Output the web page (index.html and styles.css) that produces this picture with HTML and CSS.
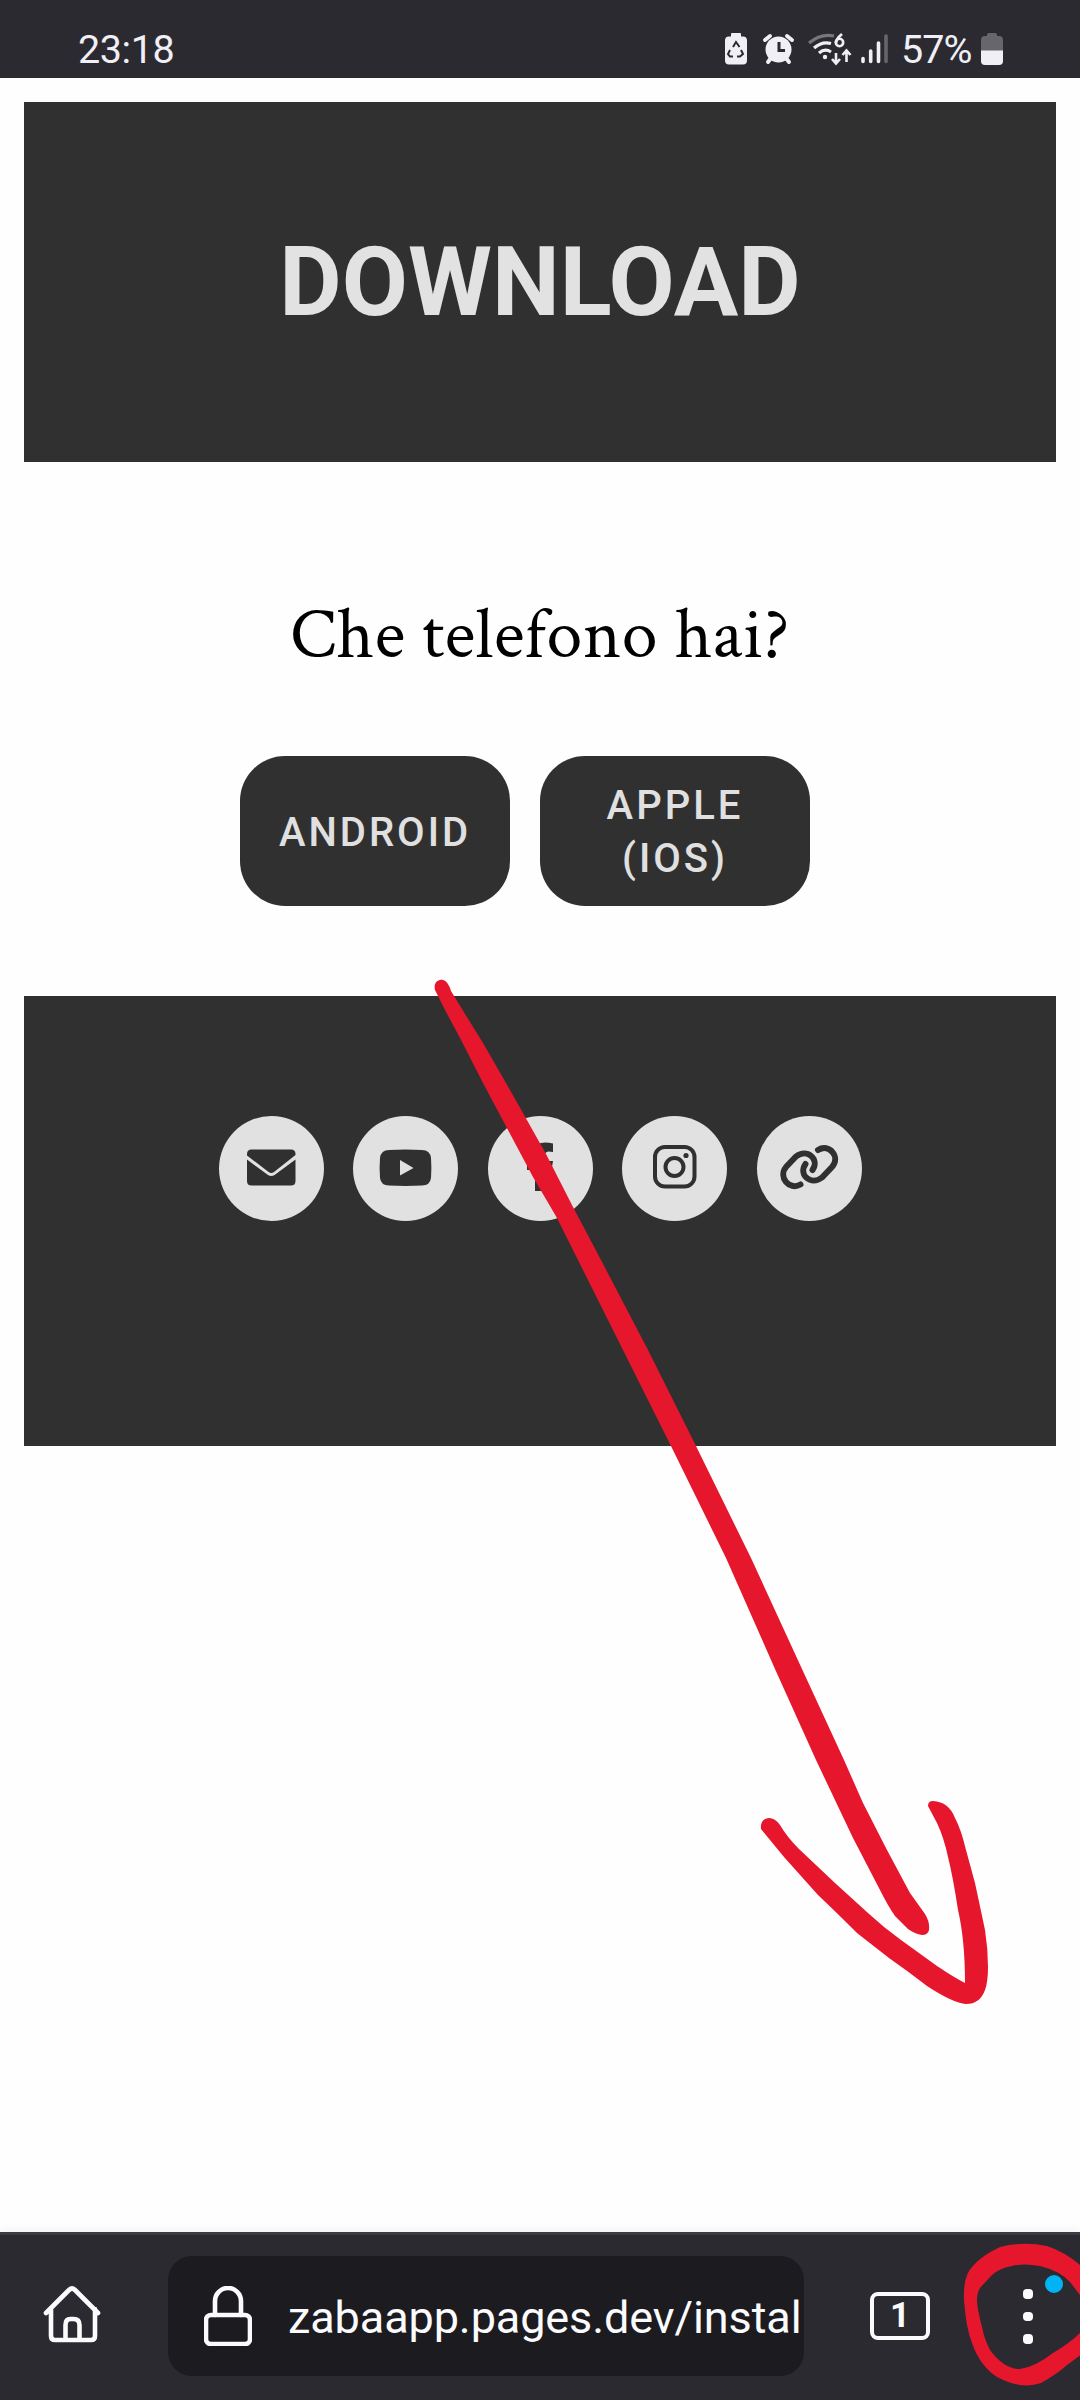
FILE: index.html
```html
<!DOCTYPE html>
<html lang="it">
<head>
<meta charset="utf-8">
<title>Download</title>
<link rel="stylesheet" href="styles.css">
</head>
<body>
<div class="status">
  <span class="clock">23:18</span>
  <svg class="status-icons" width="170" height="36" viewBox="720 31 170 36">
    <path fill="#f0eff5" d="M731 34q0-1 1-1h8q1 0 1 1v2.500h2q4 0 4 4v20q0 4-4 4h-14q-4 0-4-4v-20q0-4 4-4h2z"/>
    <g fill="none" stroke="#2b2a30" stroke-width="2"><path d="M733 47l3-5 3.500 5M741 50l2 4-3 2.500h-3M733 56.500h-3l-2-2.500 2-4"/></g>
    <circle cx="778.500" cy="49.500" r="13" fill="#f0eff5"/>
    <path d="M765 40l5-4M787 36l5 4M768 62l3-4M789 62l-3-4" stroke="#f0eff5" stroke-width="4" stroke-linecap="round"/>
    <path d="M779 42v8.500h6" fill="none" stroke="#2b2a30" stroke-width="3"/>
    <g fill="none" stroke-width="3.200">
      <path d="M809 43q12-10 25-7" stroke="#77767c"/>
      <path d="M814 48q8-7 17-4.500M819 53q6-5 12-1" stroke="#f0eff5"/>
    </g>
    <circle cx="825" cy="57" r="2.200" fill="#f0eff5"/>
    <path d="M842 34q-6 5-6 9" fill="none" stroke="#f0eff5" stroke-width="2.800"/>
    <circle cx="839.500" cy="42.500" r="3.700" fill="none" stroke="#f0eff5" stroke-width="2.600"/>
    <path d="M836 53v10M832 59l4 4.500 4-4.500M846.500 62v-11M842.500 55l4-4.500 4 4.500" fill="none" stroke="#f0eff5" stroke-width="2.600"/>
    <path d="M863 58.500v3M870.700 51v10.500M878.500 43v18.500" stroke="#f0eff5" stroke-width="3.600" stroke-linecap="round"/>
    <path d="M886 36v25.500" stroke="#66656b" stroke-width="3.600" stroke-linecap="round"/>
  </svg>
  <span class="percent">57%</span>
  <svg class="battery" width="22" height="33" viewBox="0 0 22 33">
    <path fill="#67666c" d="M6 1.500Q6 0 8 0h6q2 0 2 1.500V3h2q4 0 4 4v11H0V7q0-4 4-4h2z"/>
    <path fill="#f0eff5" d="M0 17.500h22V28q0 4-4 4H4q-4 0-4-4z"/>
  </svg>
</div>

<main class="page">
  <header class="hero"><h1>DOWNLOAD</h1></header>
  <section class="question">
    <p>Che telefono hai?</p>
    <div class="choices">
      <a class="choice">ANDROID</a>
      <a class="choice">APPLE (IOS)</a>
    </div>
  </section>
  <footer class="social">
    <a class="round"><svg viewBox="0 0 105 105">
      <path d="M28 38q0-4.500 4.500-4.500h39.500q4.500 0 4.500 4.500v1L55 56q-2.700 2-5.400 0L28 39.500zM28 43.500l21 15.500q3.300 2 6.600 0L76.500 43.500V65q0 4.500-4.500 4.500H32.500Q28 69.500 28 65z"/>
    </svg></a>
    <a class="round"><svg viewBox="0 0 105 105">
      <path fill-rule="evenodd" d="M36 34q16.500-1.200 33 0 8 0 9 8 .8 10 0 20-1 7.500-9 7.500-16.500.8-33 0-8 0-9-7.500-.8-10 0-20 1-8 9-8zM47 44v15.500L60.500 52z"/>
    </svg></a>
    <a class="round"><svg viewBox="0 0 105 105">
      <path d="M65 27.500q-7-1.500-12-.5-7 1.500-7 10v7h-7v10h8V75h10.500V54h6l1.500-9h-8.500V40q0-4 4-4.500l4.500 .5z"/>
    </svg></a>
    <a class="round"><svg viewBox="0 0 105 105">
      <rect class="line" x="33" y="31" width="39.500" height="39.500" rx="10"/>
      <circle class="line" cx="52.500" cy="51" r="9"/>
      <circle cx="64" cy="39.500" r="2.600"/>
    </svg></a>
    <a class="round"><svg viewBox="0 0 105 105">
      <path class="chain" d="M43.500 68.500C32 75 21 61 29 51L39 40.500C50 32 63 43 55.500 54M61 34C72 27 84 41 75 51L65 61.500C54 70 41 59 48.500 48"/>
    </svg></a>
  </footer>
</main>

<nav class="browser-bar">
  <svg class="home" width="58" height="60" viewBox="0 0 58 60">
    <path d="M3 29L26 6q3-3 6 0l23 23M8 25v27q0 4 4 4h36q4 0 4-4V25M22.500 56V41q0-6 5-6h3q6 0 6 6v15"/>
  </svg>
  <div class="address">
    <svg class="lock" width="48" height="60" viewBox="0 0 48 60">
      <rect x="2" y="29" width="44" height="29" rx="5"/>
      <path d="M11 29V15a13 13 0 0 1 26 0v14"/>
    </svg>
    <span>zabaapp.pages.dev/instal</span>
  </div>
  <div class="tabs">1</div>
  <div class="menu"><i></i><i></i><i></i><b></b></div>
</nav>

<svg class="ink" width="1080" height="2400" viewBox="0 0 1080 2400">
  <path d="M435 990C433 982 439 979 443 980Q448 981 451 991L462 1009 483 1043 514 1097 546 1154 573 1207 601 1260 648 1350 696 1446 751 1558 802 1669 844 1760 863 1803 887 1850 910 1893 925 1914Q930 1922 929 1930Q928 1935 922 1935Q915 1934 908 1929L895 1916Q888 1906 880 1890L853 1838 816 1760 775 1669 726 1558 671 1446 623 1350 578 1260 557 1218 533 1177 500 1115 483 1083 460 1038 445 1010Z"/>
  <path d="M761 1829Q760 1819 769 1818Q775 1818 780 1825Q787 1837 799 1849L835 1883 868 1913Q883 1927 901 1940L937 1966Q955 1978 965 1983Q965 1940 958 1910Q953 1877 948 1857Q944 1838 937 1823L928 1806Q928 1801 933 1801Q949 1802 955 1818Q961 1829 966 1850L975 1883Q981 1911 985 1930Q988 1949 988 1967Q988 1982 985 1990Q980 2004 966 2004Q953 2003 927 1986Q909 1972 889 1958L857 1933Q836 1912 818 1895L784 1857Z"/>
  <path fill-rule="evenodd" d="M1090 2273L1080 2265Q1065 2252 1047 2246Q1023 2241 1000 2247Q981 2256 973 2266Q963 2275 964 2300Q966 2328 972 2343Q980 2366 997 2377Q1022 2390 1041 2383Q1057 2374 1067 2365L1090 2348V2325L1080 2333Q1070 2343 1053 2353Q1035 2367 1020 2369Q1004 2369 990 2350Q984 2338 982 2327Q977 2308 977 2300Q977 2293 980 2288L992 2275Q1000 2268 1012 2266Q1023 2263 1040 2266Q1060 2271 1070 2282L1080 2295 1090 2310Z"/>
</svg>
</body>
</html>
```
FILE: styles.css
```css
* { box-sizing: border-box; }
body {
  position: relative;
  display: flex;
  flex-direction: column;
  width: 1080px;
  height: 2400px;
  margin: 0;
  overflow: hidden;
  background: #fefefe;
  font-family: Roboto, sans-serif;
}
.status {
  display: flex;
  height: 78px;
  padding: 0 77px 0 78px;
  background: #2b2a30;
  color: #f0eff5;
  font-size: 39.5px;
  line-height: 46px;
}
.clock { margin: 27px auto 0 0; letter-spacing: -0.4px; }
.status-icons { margin-top: 31px; }
.percent { width: 78px; margin: 27px 2px 0 11px; letter-spacing: -1px; }
.battery { margin-top: 33px; }

.page { flex: 1; padding: 24px 24px 0; }
.hero {
  display: flex;
  align-items: center;
  justify-content: center;
  height: 360px;
  background: #303030;
}
h1 {
  margin: 0;
  color: #e2e2e2;
  font-size: 96px;
  line-height: 112px;
  font-weight: 700;
}
.question { height: 534px; padding-top: 129px; }
.question p {
  height: 90px;
  margin: 0;
  color: #000;
  font: 72px/90px "Crimson Text", "Liberation Serif", serif;
  letter-spacing: .6px;
  text-align: center;
}
.choices { display: flex; gap: 30px; padding: 75px 0 0 216px; }
.choice {
  display: flex;
  align-items: center;
  justify-content: center;
  width: 270px;
  height: 150px;
  padding: 2px 36px 0;
  border-radius: 45px;
  background: #303030;
  color: #e0e0e0;
  font-size: 40px;
  font-weight: 500;
  line-height: 53px;
  letter-spacing: 3px;
  text-align: center;
}
.social {
  display: flex;
  justify-content: center;
  gap: 29.5px;
  height: 450px;
  padding-top: 120px;
  background: #303030;
}
.round { width: 105px; height: 105px; border-radius: 50%; background: #e1e1e1; }
.round svg { display: block; fill: #303030; }
.round .line { fill: none; stroke: #303030; stroke-width: 4; }
.round .chain { fill: none; stroke: #303030; stroke-width: 6; stroke-linecap: round; }

.browser-bar {
  display: flex;
  height: 168px;
  border-top: 3px solid #3c3b41;
  background: #2b2a30;
  box-shadow: 0 -2px 9px rgba(0, 0, 0, .06);
}
.browser-bar svg { fill: none; stroke: #fbfbfe; stroke-width: 4.6; stroke-linecap: round; }
.home { margin: 49px 0 0 43px; }
.address {
  display: flex;
  width: 636px;
  height: 120px;
  margin: 21px 0 0 67px;
  padding: 30px 0 0 36px;
  border-radius: 24px;
  background: #1c1b20;
}
.address span {
  margin: 5px 0 0 36px;
  color: #fbfbfe;
  font-size: 45px;
  line-height: 54px;
  letter-spacing: -0.1px;
}
.lock { flex: none; }
.tabs {
  width: 60px;
  height: 48px;
  margin: 57px 0 0 66px;
  border: 4px solid #fbfbfe;
  border-radius: 8px;
  color: #fbfbfe;
  font-size: 35px;
  font-weight: 700;
  line-height: 40px;
  text-align: center;
}
.menu {
  position: relative;
  display: flex;
  flex-direction: column;
  gap: 13px;
  margin: 54px 0 0 93px;
}
.menu i { width: 9.500px; height: 9.500px; border-radius: 4px; background: #fbfbfe; }
.menu b {
  position: absolute;
  left: 22px;
  top: -14px;
  width: 18px;
  height: 18px;
  border-radius: 50%;
  background: #00b3f4;
}
.ink { position: absolute; left: 0; top: 0; fill: #e6172d; pointer-events: none; }
```
